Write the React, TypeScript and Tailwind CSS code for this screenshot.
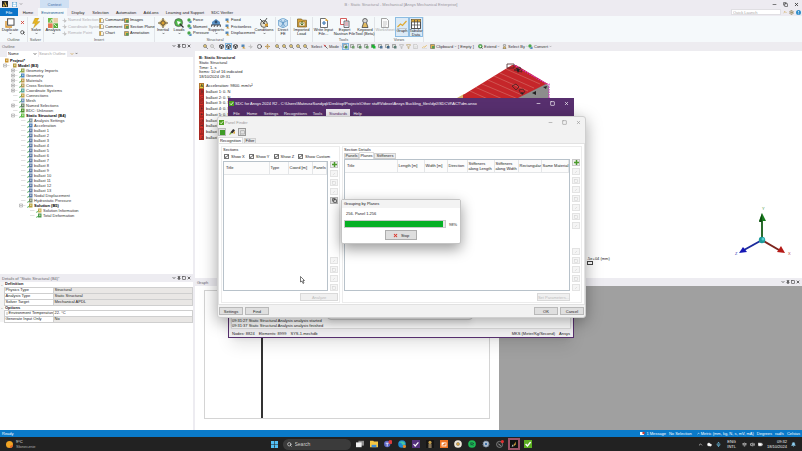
import type { ReactNode } from "react";
import clsx from "clsx";
import {
  BatteryMedium,
  Bell,
  Box,
  Check,
  ChevronDown,
  ChevronUp,
  Circle,
  Cloud,
  Copy,
  Filter,
  MessageSquare,
  Mic,
  Minus,
  Move,
  Pin,
  Search,
  Settings as Gear,
  Square,
  Volume2,
  Wifi,
  X,
} from "lucide-react";

/* ---------- small drawings ---------- */

function Svg({ className, children }: { className?: string; children: ReactNode }) {
  return (
    <svg viewBox="0 0 10 10" className={clsx("shrink-0", className)} aria-hidden="true">
      {children}
    </svg>
  );
}

const art: Record<string, ReactNode> = {
  duplicate: (
    <>
      <path d="M1 3v6h6" fill="none" stroke="#d9962f" strokeWidth="1.4" />
      <rect x="2.6" y="0.8" width="6.4" height="6.4" fill="#fff" stroke="#4c4c4c" strokeWidth="1" />
    </>
  ),
  solve: <path d="M4 0h4L6 3.6h3L2.5 10 4.2 5.5H1.5z" fill="#e5b422" stroke="#a8821b" strokeWidth="0.3" />,
  analysis: (
    <>
      <path d="M0 0h5v5H0z" fill="#6dbb4a" />
      <path d="M5 0h5v5H5z" fill="#e8cfa8" />
      <path d="M0 5h5v5H0z" fill="#e57a55" />
      <path d="M5 5h5v5H5z" fill="#58ad3c" />
      <path d="M2 4l2-3 1 3M6 6l3 3M5 0v10M0 5h10" stroke="#f3f1df" strokeWidth="0.8" fill="none" />
    </>
  ),
  inertial: (
    <>
      <path d="M5 0l5 5-5 5-5-5z" fill="#f0d48a" />
      <path d="M5 0v10M0 5h10" stroke="#4a4a4a" strokeWidth="0.9" />
      <circle cx="5" cy="5" r="2.2" fill="#d9a12f" stroke="#444" strokeWidth="0.8" />
    </>
  ),
  loads: (
    <>
      <circle cx="4.6" cy="4.6" r="4" fill="#4db848" stroke="#555" strokeWidth="0.7" />
      <path d="M3 3l4 1-3 3z" fill="#fff" />
      <path d="M6 6l3.5 3.5" stroke="#333" strokeWidth="1.2" />
    </>
  ),
  supports: (
    <>
      <path d="M1 4l4-3 4 3v3H1z" fill="#5c93c6" />
      <path d="M0 9l1-2M3 9l1-2M6 9l1-2M9 9l1-2M0 7h10" stroke="#444" strokeWidth="0.9" />
      <circle cx="5" cy="4" r="1.4" fill="#2f4d6b" />
    </>
  ),
  conditions: (
    <>
      <circle cx="5" cy="6" r="3.4" fill="#e6e1cd" stroke="#444" strokeWidth="0.8" />
      <path d="M1 1l8 8M8 0L4 6" stroke="#444" strokeWidth="0.9" />
      <circle cx="7.5" cy="7" r="1.6" fill="#d99a28" />
    </>
  ),
  direct: (
    <>
      <path d="M5 0l4.5 2.5v5L5 10 .5 7.500v-5z" fill="#c9e0f2" stroke="#5e9ac9" strokeWidth="0.7" />
      <path d="M.5 2.500L5 5l4.500-2.500M5 5v5M2.500 1.300l4.500 7M7.500 1.300L3 8.500" stroke="#4d8bbd" strokeWidth="0.6" fill="none" />
    </>
  ),
  imported: (
    <>
      <path d="M.5 1h4l1 1.200h4V9H.5z" fill="#d8a53a" stroke="#7a5a1e" strokeWidth="0.7" />
      <path d="M2 4h6v4H2z" fill="#f7eccd" stroke="#7a5a1e" strokeWidth="0.5" />
      <path d="M5 3v4M3.500 5.500L5 7l1.500-1.500" stroke="#3b6d2b" strokeWidth="0.9" fill="none" />
    </>
  ),
  file: (
    <>
      <path d="M1.500.5h5l2 2v7h-7z" fill="#fff" stroke="#4d4d4d" strokeWidth="0.8" />
      <path d="M3 5h4M5 3v4" stroke="#3c79b4" strokeWidth="1.200" />
      <path d="M6.500 0v3h3" fill="#e1aa3c" />
    </>
  ),
  nastran: (
    <>
      <path d="M.5.5h6v6h-6z" fill="#fff" stroke="#cf4a4a" strokeWidth="0.9" />
      <path d="M4 3h5v6.500H4z" fill="#e3edf6" stroke="#555" strokeWidth="0.8" />
      <path d="M5 5h3M5 7h3" stroke="#d34d4d" strokeWidth="0.7" />
    </>
  ),
  keyword: (
    <>
      <circle cx="5" cy="2.800" r="2.300" fill="#d9d9d9" stroke="#444" strokeWidth="0.8" />
      <path d="M3.500 5L2 9.500h6L6.500 5" fill="#e2bb62" stroke="#444" strokeWidth="0.8" />
    </>
  ),
  worksheet: (
    <>
      <path d="M1.500.5h5l2 2v7h-7z" fill="#fbfbfb" stroke="#8b8b8b" strokeWidth="0.8" />
      <path d="M3 4h4M3 6h4M3 8h3" stroke="#a5a5a5" strokeWidth="0.6" />
    </>
  ),
  graph: (
    <>
      <path d="M.5 8l3-3 2 1.500L9.500 2" fill="none" stroke="#dfa92f" strokeWidth="1.200" />
      <path d="M0 9.500h10" stroke="#a5a5a5" strokeWidth="0.5" />
    </>
  ),
  table: (
    <>
      <rect x=".5" y=".5" width="9" height="9" fill="#fff" stroke="#444" strokeWidth="0.9" />
      <rect x=".5" y=".5" width="9" height="2.500" fill="#d9a638" />
      <path d="M.5 3h9M.5 6h9M3.500 1v8.500M6.500 1v8.500" stroke="#444" strokeWidth="0.7" />
    </>
  ),
  star: (
    <>
      <path d="M5 1v8M1 5h8" stroke="#a5a5a5" strokeWidth="1" />
      <circle cx="6" cy="6" r="2.500" fill="#c7c7c7" />
    </>
  ),
  doc: (
    <>
      <path d="M1 1h6l2 2v6H1z" fill="#f8f4e3" stroke="#666" strokeWidth="1" />
      <path d="M1 1h3v8H1z" fill="#d6a53d" />
    </>
  ),
  image: (
    <>
      <path d="M1 1h8v8H1z" fill="#e0b24d" stroke="#555" strokeWidth="1" />
      <path d="M4 4h5v5H4z" fill="#5a9a55" />
    </>
  ),
  load: (
    <>
      <circle cx="4" cy="4" r="3.400" fill="#49a64b" />
      <path d="M3 9l6-4v5z" fill="#3f7fb8" />
    </>
  ),
  support: (
    <>
      <path d="M1 1h6v5H1z" fill="#4f86bb" />
      <path d="M4 4l5 5H3z" fill="#c8973c" />
    </>
  ),
};

const Art = ({ name, className }: { name: string; className?: string }) => <Svg className={className}>{art[name]}</Svg>;

const VerifierLogo = ({ className }: { className?: string }) => (
  <Svg className={className}>
    <rect width="10" height="10" fill="#4e9f1f" />
    <path d="M2 5l2.300 2.500L8.300 2.500" fill="none" stroke="#fff" strokeWidth="1.700" />
  </Svg>
);

/* ---------- top ribbon ---------- */

const ribbonTabs = [
  { label: "File", width: "w-[18px]" },
  { label: "Home", width: "w-5" },
  { label: "Environment", width: "w-[29px]" },
  { label: "Display", width: "w-[22px]" },
  { label: "Selection", width: "w-[23px]" },
  { label: "Automation", width: "w-7" },
  { label: "Add-ons", width: "w-[22px]" },
  { label: "Learning and Support", width: "w-[46px]" },
  { label: "SDC Verifier", width: "w-7" },
];

function TitleBar() {
  return (
    <header className="bg-[#edebf1]">
      <div className="relative flex h-2 items-center justify-between">
        <div className="flex h-full items-center">
          <Svg className="ml-0.5 h-[6px] w-[6px]">
            <rect width="10" height="10" fill="#222" />
            <path d="M5 1l4 8H7L4 3zM3 4l2 5H1z" fill="#e5b63c" />
          </Svg>
          <Svg className="ml-1 h-[5px] w-[5px]">
            <rect x="0.5" y="0.5" width="9" height="9" fill="#b9def4" stroke="#5a9cc9" />
            <path d="M3 1h4v3H3zM2 6h6v3H2z" fill="#fff" />
          </Svg>
          <ChevronDown className="ml-0.5 h-1 w-1" />
          <span className="ml-[17px] flex h-full w-[29px] items-center justify-center bg-[#cfe0f3] text-[#3f6ea8]">Context</span>
        </div>
        <h1 className="absolute inset-x-0 text-center text-[#96949b]">B : Static Structural - Mechanical [Ansys Mechanical Enterprise]</h1>
        <div className="relative mr-[3px] flex gap-[6px] text-[#333]">
          <button aria-label="Minimize"><Minus className="h-[5px] w-[5px]" strokeWidth={3} /></button>
          <button aria-label="Restore"><Copy className="h-[5px] w-[5px]" strokeWidth={3} /></button>
          <button aria-label="Close"><X className="h-[5px] w-[5px]" strokeWidth={4} /></button>
        </div>
      </div>
      <div className="flex h-2 items-center justify-between">
        <nav className="flex h-full">
          {ribbonTabs.map((t, i) => (
            <button
              key={t.label}
              className={clsx(
                "h-full shrink-0",
                t.width,
                i === 0 && "bg-[#0b74c8] text-white",
                i === 2 && "bg-[#f5f9fb] text-[#265a8f]"
              )}
            >
              {t.label}
            </button>
          ))}
        </nav>
        <div className="flex items-center gap-0.5 pr-px">
          <input
            aria-label="Quick Launch"
            placeholder="Quick Launch"
            className="h-[6px] w-[50px] border border-[#e0dfe3] bg-white px-px placeholder:text-[#a5a5a5]"
          />
          <ChevronUp className="h-1 w-1 text-[#c79528]" strokeWidth={4} />
          <Gear className="h-[5px] w-[5px] text-[#8b7a4b]" strokeWidth={3} />
          <Svg className="h-[5px] w-[5px]">
            <circle cx="5" cy="5" r="5" fill="#2f8ecb" />
            <path d="M5 2v3M5 7v1.500" stroke="#fff" strokeWidth="1.500" />
          </Svg>
        </div>
      </div>
    </header>
  );
}

function BigButton({ icon, lines, width, arrow, dim, on }: { icon: string; lines: string[]; width: string; arrow?: boolean; dim?: boolean; on?: boolean }) {
  return (
    <button
      className={clsx(
        "flex h-5 shrink-0 flex-col items-center pt-px leading-[4px]",
        width,
        dim && "text-[#a9a9a9]",
        on && "border border-[#8dbce2] bg-[#dbeaf6]"
      )}
    >
      <Art name={icon} className="h-[10px] w-[10px]" />
      {lines.map((l) => (
        <span key={l} className="whitespace-nowrap">{l}</span>
      ))}
      {arrow && <ChevronDown className="h-[3px] w-[3px]" strokeWidth={4} />}
    </button>
  );
}

function SmallList({ items, width, icon, dim }: { items: string[]; width: string; icon: string; dim?: boolean }) {
  return (
    <div className={clsx("flex h-[19px] shrink-0 flex-col justify-between", width, dim && "text-[#b0afb3]")}>
      {items.map((label) => (
        <button key={label} className="flex items-center gap-px whitespace-nowrap leading-[6px]">
          <Art name={icon} className="h-[5px] w-[5px]" />
          {label}
        </button>
      ))}
    </div>
  );
}

function Group({ label, children, className }: { label: string; children: ReactNode; className?: string }) {
  return (
    <div className={clsx("flex shrink-0 flex-col justify-between border-r border-[#e1e4e8]", className)}>
      <div className="flex">{children}</div>
      <span className="text-center leading-[5px] text-[#555]">{label}</span>
    </div>
  );
}

function Ribbon() {
  return (
    <div className="flex h-[26px] overflow-hidden bg-[#f5f9fb] pt-px">
      <Group label="Outline" className="w-7">
        <BigButton icon="duplicate" lines={["Duplicate"]} width="w-5" arrow />
        <div className="flex flex-col justify-around">
          <button aria-label="Delete"><X className="h-[5px] w-[5px] text-[#d53b2f]" strokeWidth={4} /></button>
          <button aria-label="Find"><Search className="h-[5px] w-[5px]" strokeWidth={3} /></button>
        </div>
      </Group>
      <Group label="Solver" className="w-4">
        <BigButton icon="solve" lines={["Solve"]} width="w-4" arrow />
      </Group>
      <Group label="Insert" className="w-[111px]">
        <BigButton icon="analysis" lines={["Analysis"]} width="w-[18px]" arrow />
        <SmallList icon="star" dim width="w-[37px]" items={["Named Selection", "Coordinate System", "Remote Point"]} />
        <SmallList icon="doc" width="w-[25px]" items={["Commands", "Comment", "Chart"]} />
        <SmallList icon="image" width="w-[28px]" items={["Images", "Section Plane", "Annotation"]} />
      </Group>
      <Group label="Structural" className="w-[121px]">
        <BigButton icon="inertial" lines={["Inertial"]} width="w-4" arrow />
        <BigButton icon="loads" lines={["Loads"]} width="w-4" arrow />
        <SmallList icon="load" width="w-5" items={["Force", "Moment", "Pressure"]} />
        <BigButton icon="supports" lines={["Supports"]} width="w-[18px]" arrow />
        <SmallList icon="support" width="w-[28px]" items={["Fixed", "Frictionless", "Displacement"]} />
        <BigButton icon="conditions" lines={["Conditions"]} width="w-[22px]" arrow />
      </Group>
      <Group label="" className="w-[15px]">
        <BigButton icon="direct" lines={["Direct", "FE"]} width="w-[14px]" />
      </Group>
      <Group label="" className="w-[22px]">
        <BigButton icon="imported" lines={["Imported", "Load"]} width="w-[21px]" />
      </Group>
      <Group label="Tools" className="w-[62px]">
        <BigButton icon="file" lines={["Write Input", "File..."]} width="w-[21px]" />
        <BigButton icon="nastran" lines={["Export", "Nastran File"]} width="w-[21px]" />
        <BigButton icon="keyword" lines={["Keyword", "Tool (Beta)"]} width="w-5" />
      </Group>
      <Group label="Views" className="w-[49px]">
        <BigButton icon="worksheet" lines={["Worksheet"]} width="w-5" dim />
        <BigButton icon="graph" lines={["Graph"]} width="w-[14px]" on />
        <BigButton icon="table" lines={["Tabular", "Data"]} width="w-[14px]" on />
      </Group>
    </div>
  );
}

/* ---------- left column ---------- */

function PanelHeader({ title }: { title: string }) {
  return (
    <div className="flex h-2 shrink-0 items-center justify-between bg-[#edecf1] px-0.5 text-[#66646b]">
      <span className="whitespace-nowrap">{title}</span>
      <div className="flex gap-px text-[#222]">
        <button aria-label="Menu"><ChevronDown className="h-1 w-1" strokeWidth={4} /></button>
        <button aria-label="Pin"><Pin className="h-1 w-1" strokeWidth={4} /></button>
        <button aria-label="Maximize"><Square className="h-1 w-1" strokeWidth={3} /></button>
        <button aria-label="Close"><X className="h-1 w-1" strokeWidth={4} /></button>
      </div>
    </div>
  );
}

type Node = { label: string; level: number; open?: "+" | "-"; color: string; bold?: boolean };

const tree: Node[] = [
  { label: "Project*", level: 0, color: "#c9922a", bold: true },
  { label: "Model (B3)", level: 1, open: "-", color: "#b59a3c", bold: true },
  { label: "Geometry Imports", level: 2, open: "+", color: "#9aa54a" },
  { label: "Geometry", level: 2, open: "+", color: "#4b86c4" },
  { label: "Materials", level: 2, open: "+", color: "#c29a4a" },
  { label: "Cross Sections", level: 2, open: "+", color: "#b89b5a" },
  { label: "Coordinate Systems", level: 2, open: "+", color: "#5aa6a0" },
  { label: "Connections", level: 2, color: "#c2a14a" },
  { label: "Mesh", level: 2, color: "#6f93bd" },
  { label: "Named Selections", level: 2, open: "+", color: "#6a7f6a" },
  { label: "BDC: Unknown", level: 2, color: "#4a8f2a" },
  { label: "Static Structural (B4)", level: 2, open: "-", color: "#67c24a", bold: true },
  { label: "Analysis Settings", level: 3, color: "#7d93a5" },
  { label: "Acceleration", level: 3, color: "#4779b8" },
  ...Array.from({ length: 13 }, (_, i) => ({ label: `ballast ${i + 1}`, level: 3, color: "#5876a8" })),
  { label: "Nodal Displacement", level: 3, color: "#5876a8" },
  { label: "Hydrostatic Pressure", level: 3, color: "#7c8a72" },
  { label: "Solution (B5)", level: 3, open: "-", color: "#b9a23a", bold: true },
  { label: "Solution Information", level: 4, color: "#d0b257" },
  { label: "Total Deformation", level: 4, color: "#4c9a4c" },
];

const indent = ["pl-[3px]", "pl-[3px]", "pl-[11px]", "pl-[19px]", "pl-7"];

function Outline() {
  return (
    <section className="flex min-h-0 flex-1 flex-col">
      <PanelHeader title="Outline" />
      <div className="flex h-[7px] shrink-0 items-center gap-px bg-[#edecf1] pl-[7px]">
        <div className="relative">
          <select aria-label="Filter type" className="h-[6px] w-[31px] appearance-none bg-white pl-px">
            <option>Name</option>
          </select>
          <ChevronDown className="pointer-events-none absolute top-px right-px h-1 w-1" strokeWidth={4} />
        </div>
        <input aria-label="Search Outline" placeholder="Search Outline" className="h-[6px] w-7 bg-white placeholder:text-[#a3a3a3]" />
        <ChevronDown className="ml-0.5 h-1 w-1 text-[#c9922a]" strokeWidth={4} />
        <ChevronDown className="h-[3px] w-[3px]" strokeWidth={4} />
      </div>
      <ul className="min-h-0 flex-1 overflow-hidden bg-white pt-px text-[#333]">
        {tree.map((n) => (
          <li key={n.label} className={clsx("flex h-[5px] items-center whitespace-nowrap leading-[5px]", indent[n.level], n.bold && "font-bold text-black")}>
            {n.level > 0 && (
              <span className="flex w-2 shrink-0 items-center">
                <Svg className="h-[5px] w-2">
                  {n.open && <path d={n.open === "+" ? "M-2 2h6v6h-6zM-1 5h4M1 3v4" : "M-2 2h6v6h-6zM-1 5h4"} fill="none" stroke="#888" strokeWidth="1" />}
                  <path d={n.open ? "M4 5h6" : "M1 5h9"} stroke="#c4c4c4" strokeWidth="1" />
                </Svg>
              </span>
            )}
            <Svg className="mr-px h-[5px] w-[6px]">
              <rect x="3" y="1" width="7" height="8" fill={n.color} />
              <path d="M5 3h3v3H5z" fill="#f6f4e8" opacity="0.6" />
              {n.level > 1 && <path d="M-1 7l1.500 2L4 5" fill="none" stroke="#2fa138" strokeWidth="1.500" />}
            </Svg>
            {n.label}
          </li>
        ))}
      </ul>
    </section>
  );
}

const details = [
  { title: "Definition", rows: [["Physics Type", "Structural"], ["Analysis Type", "Static Structural"], ["Solver Target", "Mechanical APDL"]] },
  { title: "Options", rows: [["Environment Temperature", "22. °C"], ["Generate Input Only", "No"]] },
];

function Details() {
  return (
    <section className="h-[156px] shrink-0 bg-white">
      <PanelHeader title={'Details of "Static Structural (B4)"'} />
      <table className="w-full table-fixed border-collapse leading-[4px]">
        <colgroup>
          <col className="w-1" />
          <col className="w-[49px]" />
          <col />
        </colgroup>
        {details.map((g) => (
          <tbody key={g.title}>
            <tr className="h-[5px]">
              <td className="bg-[#f4f4f4] p-0 text-center">-</td>
              <th colSpan={2} className="p-0 pl-px text-left">{g.title}</th>
            </tr>
            {g.rows.map(([k, v]) => (
              <tr key={k} className="h-[6px]">
                <td className="bg-[#f4f4f4] p-0" />
                <td className="overflow-hidden border border-[#cfcfcf] p-0 pl-px whitespace-nowrap">
                  {k === "Environment Temperature" ? (
                    <label className="flex items-center">
                      <input type="checkbox" className="mr-px h-[3px] w-[3px] appearance-none border border-[#ddd]" />
                      {k}
                    </label>
                  ) : (
                    k
                  )}
                </td>
                <td className={clsx("border border-[#cfcfcf] p-0 pl-px", k !== "Environment Temperature" && "bg-[#e9e7e5]")}>{v}</td>
              </tr>
            ))}
          </tbody>
        ))}
      </table>
    </section>
  );
}

/* ---------- graphics area ---------- */

function Lens({ dim }: { dim?: boolean }) {
  return (
    <Svg className="h-[5px] w-[5px]">
      <circle cx="4" cy="4" r="3" fill={dim ? "#e4e4e4" : "#edcf76"} stroke={dim ? "#aaa" : "#666"} strokeWidth="1.300" />
      <path d="M6.500 6.500L9.500 9.500" stroke={dim ? "#aaa" : "#555"} strokeWidth="1.600" />
    </Svg>
  );
}

const pickColors = ["#4d8f5a", "#6f9d6b", "#5f8f63", "#6b9a6b", "#18b52c", "#4e7395", "#3f6485", "#5b7c74"];

function Toolbar() {
  return (
    <div className="flex h-[9px] shrink-0 items-center overflow-hidden bg-[#edecf0] pl-2 whitespace-nowrap text-[#333]">
      <div className="flex w-4 gap-0.5"><Lens /><Lens dim /></div>
      <div className="flex w-[22px] items-center gap-px">
        <Box className="h-[5px] w-[5px]" strokeWidth={4} />
        <span className="border border-[#7fb5e0] bg-[#dcebf7]"><Box className="h-[5px] w-[5px]" strokeWidth={4} /></span>
        <Box className="h-[5px] w-[5px]" strokeWidth={4} />
      </div>
      <div className="flex w-4 gap-0.5">
        <Art name="support" className="h-[5px] w-[5px]" />
        <Art name="star" className="h-[5px] w-[5px]" />
      </div>
      <div className="flex w-[18px] items-center gap-[3px]">
        <Circle className="h-[5px] w-[5px]" strokeWidth={3} />
        <Move className="h-[5px] w-[5px] text-[#b58a3c]" strokeWidth={3} />
      </div>
      <div className="flex w-9 gap-0.5"><Lens /><Lens /><Lens /><Lens /><Lens /></div>
      <span className="w-3">Select</span>
      <button className="flex w-5 items-center gap-px">
        <Svg className="h-[5px] w-[5px]"><path d="M1 1l5 2-2 3z" fill="#c33" /><path d="M4 4l5 5" stroke="#444" strokeWidth="1.500" /></Svg>
        Mode
        <ChevronDown className="h-[3px] w-[3px]" />
      </button>
      <div className="flex w-14 items-center gap-0.5">
        {pickColors.map((c, i) => (
          <Svg key={c} className={clsx("h-[5px] w-[5px]", i === 0 && "bg-[#cfe5f6] outline outline-[#7fb5e0]")}>
            <path d="M1 1h6v6H1z" fill={i === 4 ? c : "#d5ddd5"} stroke="#666" strokeWidth="1" />
            <path d="M4 4h5v5H4z" fill={c} />
          </Svg>
        ))}
      </div>
      <div className="flex w-[23px] items-center gap-0.5 text-[#aaa]">
        <Filter className="h-[5px] w-[5px]" strokeWidth={3} />
        <Filter className="h-[5px] w-[5px] text-[#b59a5a]" strokeWidth={3} />
        <Art name="worksheet" className="h-[5px] w-[5px]" />
      </div>
      <Art name="graph" className="mr-[3px] h-[5px] w-[5px]" />
      <button className="flex w-7 items-center gap-px"><Art name="image" className="h-[5px] w-[5px]" />Clipboard<ChevronDown className="h-[3px] w-[3px]" /></button>
      <span className="w-5">[ Empty ]</span>
      <button className="flex w-6 items-center gap-px"><Art name="loads" className="h-[5px] w-[5px]" />Extend<ChevronDown className="h-[3px] w-[3px]" /></button>
      <button className="flex w-[26px] items-center gap-px"><Art name="keyword" className="h-[5px] w-[5px]" />Select By<ChevronDown className="h-[3px] w-[3px]" /></button>
      <button className="flex items-center gap-px"><Art name="load" className="h-[5px] w-[5px]" />Convert<ChevronDown className="h-[3px] w-[3px]" /></button>
    </div>
  );
}

const legend = [
  "Acceleration: 9800. mm/s²",
  "ballast 1: 0. N",
  "ballast 2: 0. N",
  "ballast 3: 0. N",
  "ballast 4: 0. N",
  "ballast 5: 0. N",
  "ballast 6: 0. N",
  "ballast 7: 0. N",
  "ballast 8: 0. N",
  "ballast 9: 0. N",
];

function Viewport() {
  return (
    <section className="relative min-h-0 flex-1 overflow-hidden bg-white pt-1 pl-1">
      <div className="grid h-6 auto-rows-fr leading-[5px]">
        <strong>B: Static Structural</strong>
        <span>Static Structural</span>
        <span>Time: 1. s</span>
        <span>Items: 10 of 16 indicated</span>
        <span>18/10/2024 09:31</span>
      </div>
      <ul className="mt-1 grid h-[57px] auto-rows-fr">
        {legend.map((l, i) => (
          <li key={l} className="flex items-center gap-0.5 whitespace-nowrap leading-[5px]">
            <span className={clsx("flex h-full w-[5px] items-center justify-center border border-[#7a1c17]/50", i ? "bg-[#d8322b]" : "bg-[#e9cf45]")}>
              {"ABCDEFGHIJ"[i]}
            </span>
            {l}
          </li>
        ))}
      </ul>

      {/* hull block with its loads */}
      <svg viewBox="455 60 100 40" className="absolute top-[9px] left-[260px] h-10 w-[100px]" aria-hidden="true">
        <path d="M457 98l7-4 14 6h-20z" fill="#d8b46a" />
        <path d="M463 95l49-30h4l32 19-28 14v2h-57z" fill="#c5262a" />
        <path d="M518 98l28-14 3 2v14h-31z" fill="#8d8d8d" />
        <path d="M470 91l20 9M476 87.500l29 12.500M482 84l36 15M488 80l34 15M494 76l34 15M500 73l34 15M506 69l34 15" stroke="#d9847a" strokeWidth="0.5" fill="none" />
        <path d="M514 65l33 19h2v15" stroke="#d832c8" strokeWidth="1.200" strokeDasharray="1.500 1" fill="none" />
        <g fill="none" stroke="#4a2326" strokeWidth="0.8">
          <path d="M507 64h7v4h-7zM514 70l6-3 2 5zM512 86l4-2 3 3-3 3zM519 90l4-1 2 3-4 2z" />
        </g>
        <path d="M516 68l4 1-2 4zM532 93l4-2v4zM543 87l4-1-1 3zM521 92l3 1-2 2z" fill="#222" />
      </svg>

      <div className="absolute top-[205px] left-[392px] whitespace-nowrap leading-[5px]">
        .5e+04 (mm)
        <div className="h-1 w-[6px] border border-[#444]" />
      </div>

      {/* triad */}
      <svg viewBox="-6 0 70 52" className="absolute right-0 bottom-[21px] h-[52px] w-[70px]" aria-hidden="true">
        <path d="M24 35V16" stroke="#2a6b2c" strokeWidth="2" />
        <path d="M24 8l4 8h-7z" fill="#167a1b" />
        <path d="M24 8v9h-3z" fill="#0f4d14" />
        <path d="M24 35L6 45" stroke="#1b2a9c" strokeWidth="2" />
        <path d="M1 48l4-6 4 5z" fill="#1517b5" />
        <path d="M24 35l17 10" stroke="#7d241d" strokeWidth="2" />
        <path d="M47 48l-8-1 4-6z" fill="#b51a17" />
        <circle cx="24" cy="35" r="3.200" fill="#1d9a9a" />
        <circle cx="25" cy="34" r="1.500" fill="#53d0cf" />
        <g fontFamily="Liberation Sans" fontSize="4">
          <text x="24" y="5" fill="#3b9440">Y</text>
          <text x="50" y="50" fill="#c0392b">X</text>
          <text x="-3" y="50" fill="#2d3bb5">Z</text>
        </g>
      </svg>
    </section>
  );
}

function GraphPane() {
  return (
    <section className="flex h-[152px] shrink-0 flex-col">
      <PanelHeader title="Graph" />
      <div className="flex min-h-0 flex-1">
        <div className="w-1/2 bg-white px-[9px] pt-1 pb-[11px]">
          <div className="h-full border border-[#d4d4d4] pl-14">
            <div className="h-full w-0.5 bg-[#333]" />
          </div>
        </div>
        <div className="flex-1 bg-[#a0a0a0]" />
      </div>
    </section>
  );
}

/* ---------- floating windows ---------- */

function WindowButtons({ className }: { className?: string }) {
  return (
    <div className={clsx("flex gap-[9px]", className)}>
      <button aria-label="Minimize"><Minus className="h-[5px] w-[5px]" strokeWidth={3} /></button>
      <button aria-label="Maximize"><Square className="h-[5px] w-[5px]" strokeWidth={3} /></button>
      <button aria-label="Close"><X className="h-[5px] w-[5px]" strokeWidth={3} /></button>
    </div>
  );
}

const verifierTabs = [
  { label: "File", width: "w-[15px]" },
  { label: "Home", width: "w-4" },
  { label: "Settings", width: "w-[22px]" },
  { label: "Recognitions", width: "w-[27px]" },
  { label: "Tools", width: "w-[17px]" },
  { label: "Standards", width: "w-6" },
  { label: "Help", width: "w-[15px]" },
];

function VerifierWindow() {
  return (
    <section className="absolute top-[98px] left-[228px] flex h-[240px] w-[346px] flex-col border border-[#572f6e] bg-[#f0eff1] shadow-lg">
      <div className="flex h-[9px] items-center bg-[#572f6e] text-white">
        <VerifierLogo className="h-[5px] w-[5px]" />
        <h2 className="ml-px whitespace-nowrap">SDC for Ansys 2024 R2 - C:\Users\MateuszSandyqk\Desktop\Projects\Other stuff\Videos\Ansys Buckling_files\dp0\SDCVf\ACT\dm.anso</h2>
        <WindowButtons className="mr-1 ml-auto" />
      </div>
      <nav className="flex h-[9px] bg-[#572f6e] pt-px text-white">
        {verifierTabs.map((t) => (
          <button key={t.label} className={clsx("shrink-0", t.width, t.label === "Standards" && "bg-[#f3f1f5] text-[#572f6e]")}>
            {t.label}
          </button>
        ))}
      </nav>
      <div className="flex flex-1 flex-col justify-end">
        <div className="relative mx-0.5 border border-[#ddd] bg-white leading-[5px]">
          <p>09:31:27 Static Structural Analysis analysis started</p>
          <p>09:31:37 Static Structural Analysis analysis finished</p>
          <div className="absolute -top-1 right-[97px] left-[95px] h-[6px] rounded-b-sm border border-[#c8c8c8] bg-[#efefef] shadow-md" />
        </div>
      </div>
      <footer className="flex h-2 items-center gap-1 bg-[#f1f0f2] px-[3px]">
        <span>Nodes: 8824</span>
        <span>Elements: 8999</span>
        <span>SYS-1.mechdb</span>
        <span className="ml-auto">MKS (Meter/Kg/Second)</span>
        <span>Ansys</span>
      </footer>
    </section>
  );
}

function Tick({ label }: { label: string }) {
  return (
    <label className="relative flex items-center gap-0.5 whitespace-nowrap">
      <input type="checkbox" defaultChecked className="h-[5px] w-[5px] appearance-none border border-[#777] bg-white" />
      <Check className="pointer-events-none absolute left-0 h-[5px] w-[5px]" strokeWidth={4} />
      {label}
    </label>
  );
}

type Column = { label: string; width?: string };

function Grid({ columns, label }: { columns: Column[]; label: string }) {
  return (
    <div className="min-w-0 flex-1 overflow-hidden border border-[#b8c2ca] bg-white">
      <table aria-label={label} className="w-full table-fixed border-collapse">
        <thead>
          <tr className="h-3 bg-[#fcfcfc]">
            {columns.map((c) => (
              <th
                key={c.label}
                className={clsx("border-r border-b border-[#e4e6e8] p-0 pl-px text-left leading-[5px] font-normal whitespace-pre first:pl-0.5", c.width)}
              >
                {c.label}
              </th>
            ))}
          </tr>
        </thead>
      </table>
    </div>
  );
}

function PlusIcon() {
  return (
    <Svg className="h-[5px] w-[5px]">
      <path d="M3.500 0h3v3.500H10v3H6.500V10h-3V6.500H0v-3h3.500z" fill="#4b9b2c" />
    </Svg>
  );
}

function SideButtons({ top, bottom }: { top: number; bottom: number }) {
  const ghost = (i: number, label: string) => (
    <button key={i} aria-label={label} disabled className="flex h-[7px] w-2 items-center justify-center border border-[#e3e3e3] bg-[#f5f5f5] text-[#cfcfcf]">
      {i % 2 ? <Square className="h-1 w-1" strokeWidth={3} /> : <Minus className="h-1 w-1 -rotate-45" strokeWidth={3} />}
    </button>
  );
  return (
    <div className="flex w-2 shrink-0 flex-col justify-between">
      <div className="flex flex-col gap-0.5">
        <button aria-label="Add" className="flex h-[7px] w-2 items-center justify-center border border-[#c9c9c9] bg-[#efefef]"><PlusIcon /></button>
        {Array.from({ length: top }, (_, i) => ghost(i, `Edit ${i + 1}`))}
        {top === 3 && (
          <button aria-label="Copy" className="flex h-[7px] w-2 items-center justify-center border border-[#b5b5b5] bg-[#dcdcdc]"><Copy className="h-[5px] w-[5px]" strokeWidth={3} /></button>
        )}
      </div>
      <div className="flex flex-col gap-0.5">{Array.from({ length: bottom }, (_, i) => ghost(i, `Move ${i + 1}`))}</div>
    </div>
  );
}

const sectionColumns: Column[] = [
  { label: "Title", width: "w-[45px]" },
  { label: "Type", width: "w-[19px]" },
  { label: "Coord [m]", width: "w-6" },
  { label: "Panels" },
];

const planeColumns: Column[] = [
  { label: "Title", width: "w-[52px]" },
  { label: "Length [m]", width: "w-[27px]" },
  { label: "Width [m]", width: "w-[23px]" },
  { label: "Direction", width: "w-5" },
  { label: "Stiffeners\nalong Length", width: "w-[27px]" },
  { label: "Stiffeners\nalong Width", width: "w-6" },
  { label: "Rectangular", width: "w-[23px]" },
  { label: "Same Material" },
];

const dialogButton = "h-2 w-6 border border-[#b9b9b9] bg-[#dfdfdf]";

function PanelFinder() {
  return (
    <section className="absolute top-[116px] left-[217px] flex h-[202px] w-[369px] flex-col rounded-[3px] border border-[#cfcfcf] bg-[#f2f2f2] shadow-[0_4px_16px_rgba(0,0,0,0.35)]">
      <div className="flex h-[10px] items-center pl-px">
        <VerifierLogo className="h-[5px] w-[5px]" />
        <h2 className="ml-px text-[#999]">Panel Finder</h2>
        <WindowButtons className="mr-1 ml-auto text-[#999]" />
      </div>
      <div className="flex h-[10px] items-center gap-0.5">
        <button aria-label="Model" className="flex h-2 w-2 items-center justify-center border border-[#bbb] bg-[#ddd]">
          <Svg className="h-[5px] w-[5px]"><rect width="10" height="10" fill="#3f9c28" /></Svg>
        </button>
        <button aria-label="Highlight" className="flex h-2 w-2 items-center justify-center">
          <Svg className="h-[6px] w-[6px]"><path d="M2 6l5-6 3 2-4 5z" fill="#333" /><path d="M0 10l2-4 3 2z" fill="#7dbb3c" /><path d="M6 7l4-4v5z" fill="#d8a33a" /></Svg>
        </button>
        <button aria-label="Options" className="flex h-2 w-2 items-center justify-center border border-[#999] bg-[#e2e2e2]">
          <MessageSquare className="h-[5px] w-[5px] text-[#777]" />
        </button>
      </div>
      <div className="flex h-[6px] items-end">
        <button className="h-[6px] w-[25px] border border-b-0 border-[#ddd] bg-white leading-[4px]">Recognition</button>
        <button className="ml-px h-[5px] w-3 border border-b-0 border-[#d0d0d0] bg-[#e9e9e9] leading-[4px]">Filter</button>
      </div>
      <div className="flex min-h-0 flex-1 gap-0.5 border border-[#e2e2e2] bg-white px-0.5 pt-0.5 pb-px">
        <div className="flex w-[119px] flex-col border border-[#ececec] px-px pb-px">
          <h3 className="h-[6px] leading-[5px]">Sections</h3>
          <div className="flex h-[7px] items-center gap-1 px-px">
            <Tick label="Show X" />
            <Tick label="Show Y" />
            <Tick label="Show Z" />
            <Tick label="Show Custom" />
          </div>
          <div className="mt-px flex min-h-0 flex-1 gap-0.5">
            <Grid columns={sectionColumns} label="Sections" />
            <SideButtons top={3} bottom={4} />
          </div>
          <button disabled className="mt-0.5 h-2 w-[38px] self-end border border-[#d9d9d9] bg-[#f0f0f0] text-[#bdbdbd]">Analyze</button>
        </div>
        <div className="flex min-w-0 flex-1 flex-col border border-[#ececec] px-px pb-px">
          <h3 className="h-[5px] leading-[5px]">Section Details</h3>
          <div className="flex h-[7px]">
            <button className="mt-px w-[15px] border border-[#d0d0d0] bg-[#eee] leading-[4px]">Panels</button>
            <button className="w-[15px] border border-b-0 border-[#ddd] bg-white leading-[4px]">Planes</button>
            <button className="mt-px w-[22px] border border-[#d0d0d0] bg-[#eee] leading-[4px]">Stiffeners</button>
          </div>
          <div className="flex min-h-0 flex-1 gap-0.5">
            <Grid columns={planeColumns} label="Planes" />
            <SideButtons top={7} bottom={5} />
          </div>
          <button disabled className="mt-0.5 mr-[10px] h-2 self-end border border-[#d9d9d9] bg-[#f0f0f0] text-[#bdbdbd]">Set Parameters...</button>
        </div>
      </div>
      <footer className="flex h-3 items-center gap-0.5 px-px">
        <button className={dialogButton}>Settings</button>
        <button className={dialogButton}>Find</button>
        <button className={clsx(dialogButton, "ml-auto")}>OK</button>
        <button className={dialogButton}>Cancel</button>
      </footer>
    </section>
  );
}

function ProgressDialog() {
  return (
    <section className="absolute top-[199px] left-[341px] flex w-[120px] flex-col rounded-[2px] border border-[#c4c4c4] bg-white pb-[3px] shadow-[0_5px_14px_rgba(0,0,0,0.4)]">
      <h2 className="h-2 bg-[#f3f3f3] px-0.5 leading-[8px]">Grouping by Planes</h2>
      <p className="mt-[3px] px-1 leading-[5px]">256. Panel 1.256</p>
      <div className="mt-1 flex items-center gap-[3px] px-0.5">
        <div role="progressbar" aria-valuenow={98} className="h-2 w-[102px] border border-[#c9c9c9] bg-[#e6e6e6]">
          <div className="h-full w-[98%] bg-[#06b025]" />
        </div>
        <span>98%</span>
      </div>
      <button className="mt-0.5 flex h-[10px] w-8 items-center justify-center gap-[3px] self-center border border-[#adadad] bg-[#dedede]">
        <X className="h-[5px] w-[5px] text-[#d9362b]" strokeWidth={5} />
        Stop
      </button>
    </section>
  );
}

/* ---------- bottom bars ---------- */

function StatusBar() {
  return (
    <div className="flex h-[7px] items-center gap-[3px] bg-[#0a7ac9] px-0.5 whitespace-nowrap text-white">
      <span className="mr-auto">Ready</span>
      <button className="flex items-center gap-px">
        <Svg className="h-[5px] w-[5px]"><path d="M0 2h8v6H0z" fill="#fff" /><circle cx="7" cy="4" r="2.500" fill="#d23c32" /></Svg>
        1 Message
      </button>
      <span>No Selection</span>
      <button className="ml-0.5 flex items-center gap-px">
        <ChevronUp className="h-[3px] w-[3px]" strokeWidth={5} />
        Metric (mm, kg, N, s, mV, mA)
      </button>
      <span>Degrees</span>
      <span>rad/s</span>
      <span>Celsius</span>
    </div>
  );
}

const apps: { name: string; icon: ReactNode }[] = [
  { name: "Task View", icon: <><rect x="3" y="1" width="7" height="6" fill="#8c8c8c" /><rect y="3" width="7" height="6" fill="#f0f0f0" /></> },
  { name: "Explorer", icon: <><path d="M0 1h4l1 1h5v7H0z" fill="#f5c842" /><path d="M2 6h6v3H2z" fill="#3f8fd6" /></> },
  { name: "Teams", icon: <><circle cx="4" cy="5" r="4" fill="#5b66c4" /><path d="M2 4h4M4 4v4" stroke="#fff" /><circle cx="8" cy="2.500" r="2.500" fill="#dc3c3c" /></> },
  { name: "Edge", icon: <><circle cx="5" cy="5" r="4.800" fill="#1b87cf" /><path d="M1 4a4.500 4.500 0 018 0c0 2-2 2-4 2 0-3-3-3-4-2" fill="#46c6a4" /><circle cx="8" cy="8" r="2" fill="#e08c2b" /></> },
  { name: "Tasks", icon: <><rect width="10" height="10" fill="#53307a" /><path d="M2 5l2 2.500L8 3" fill="none" stroke="#fff" strokeWidth="1.500" /></> },
  { name: "Simulation", icon: <><rect width="10" height="10" fill="#151515" /><circle cx="5" cy="3" r="2" fill="#c8a04b" /><path d="M3 5h4v5H3z" fill="#84745a" /></> },
  { name: "Recorder", icon: <><rect width="10" height="10" fill="#ec7424" /><path d="M2 3h6v5H2z" fill="#fff" /><path d="M2 7l5-4v4z" fill="#ec7424" /></> },
  { name: "Chrome", icon: <><circle cx="5" cy="5" r="4.800" fill="#ece6d8" /><circle cx="5" cy="5" r="2" fill="#d9a33c" stroke="#777" strokeWidth="0.700" /></> },
  { name: "Spotify", icon: <><circle cx="5" cy="5" r="4.800" fill="#1db954" /><path d="M2.500 4q3-1 5 .5M3 6q2-.7 4 .5" fill="none" stroke="#133" strokeWidth="1" /></> },
  { name: "Settings", icon: <><circle cx="5" cy="5" r="3.600" fill="#b9c5d3" stroke="#7688a0" strokeWidth="1.500" strokeDasharray="1.400 1" /><circle cx="5" cy="5" r="1.500" fill="#3a6ea5" /></> },
  { name: "Obs", icon: <><circle cx="4.500" cy="5.500" r="3.800" fill="#2b2b2b" stroke="#999" strokeWidth="0.900" /><path d="M3 5l3 2" stroke="#bbb" /><circle cx="8" cy="2" r="2" fill="#e02f2f" /></> },
  { name: "Ansys", icon: <><path d="M4 8l3-6v4z" fill="#f0b23c" /><path d="M2 8l2-3v3z" fill="#ddd" /></> },
  { name: "SDC Verifier", icon: <><rect width="10" height="10" fill="#5cae22" /><path d="M2 5l2.300 2.500L8.300 2.500" fill="none" stroke="#fff" strokeWidth="1.700" /></> },
];

function Taskbar() {
  return (
    <footer className="grid h-[14px] grid-cols-[1fr_auto_1fr] items-center bg-[#222] text-[#eee]">
      <div className="flex items-center gap-[3px] pl-[6px] leading-[5px]">
        <Svg className="h-[7px] w-[7px]"><circle cx="5" cy="5" r="5" fill="#f0a424" /><path d="M5 10a5 5 0 005-5L6 7z" fill="#e5672a" /></Svg>
        <div>
          <p>9°C</p>
          <p className="text-[#aaa]">Słonecznie</p>
        </div>
      </div>
      <div className="flex items-center">
        <button aria-label="Start">
          <Svg className="h-[7px] w-[7px]"><path d="M0 0h4.600v4.600H0zM5.400 0H10v4.600H5.400zM0 5.400h4.600V10H0zM5.400 5.400H10V10H5.400z" fill="#53c0f5" /></Svg>
        </button>
        <label className="ml-[5px] flex h-[11px] w-[68px] items-center gap-[3px] rounded-full bg-[#3b3b3b] px-1">
          <Search className="h-[5px] w-[5px] shrink-0" strokeWidth={3} />
          <input aria-label="Search" placeholder="Search" className="w-full min-w-0 bg-transparent text-[5px] placeholder:text-[#ccc]" />
        </label>
        <div className="ml-[5px] flex gap-[6px]">
          {apps.map((a) => (
            <button key={a.name} aria-label={a.name} className={clsx(a.name === "Ansys" && "bg-[#111] outline-2 outline-[#9c5366]")}>
              <Svg className="h-2 w-2">{a.icon}</Svg>
            </button>
          ))}
        </div>
      </div>
      <div className="flex items-center justify-end gap-1 pr-[6px] leading-[5px]">
        <ChevronUp className="h-[5px] w-[5px]" strokeWidth={3} />
        <Cloud className="h-[5px] w-[5px] fill-white" />
        <Mic className="h-[5px] w-[5px] text-[#6fc3e8]" strokeWidth={3} />
        <div className="px-0.5 text-center">
          <p>ENG</p>
          <p>INTL</p>
        </div>
        <div className="flex gap-[3px]">
          <Wifi className="h-[5px] w-[5px]" strokeWidth={3} />
          <Volume2 className="h-[5px] w-[5px]" strokeWidth={3} />
          <BatteryMedium className="h-[5px] w-[5px] fill-white" strokeWidth={3} />
        </div>
        <div className="text-right">
          <p>09:32</p>
          <p>18/10/2024</p>
        </div>
        <Bell className="h-[5px] w-[5px] fill-[#8fd0f2] text-[#8fd0f2]" />
      </div>
    </footer>
  );
}

export default function App() {
  return (
    <div className="relative flex h-screen flex-col overflow-hidden bg-white font-['Liberation_Sans',sans-serif] text-[4px] leading-[5px] text-[#222]">
      <TitleBar />
      <Ribbon />
      <main className="flex min-h-0 flex-1">
        <aside className="flex w-[195px] shrink-0 flex-col border-r-2 border-[#edecf1]">
          <Outline />
          <Details />
        </aside>
        <div className="flex min-w-0 flex-1 flex-col">
          <Toolbar />
          <Viewport />
          <GraphPane />
        </div>
      </main>
      <StatusBar />
      <Taskbar />

      <VerifierWindow />
      <PanelFinder />
      <ProgressDialog />
      <svg viewBox="0 0 10 16" className="absolute top-[276px] left-[300px] h-2 w-[5px]" aria-hidden="true">
        <path d="M1 1v11l3-2 2 5 2-1-2-5h3z" fill="#fff" stroke="#222" strokeWidth="1.200" />
      </svg>
    </div>
  );
}
